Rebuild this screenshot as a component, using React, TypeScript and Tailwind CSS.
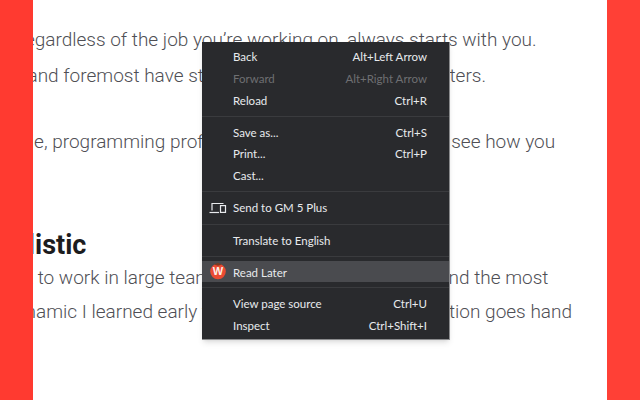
import React from 'react';

const Row = ({ label, keys, dim, active, icon }: { label: string; keys?: string; dim?: boolean; active?: boolean; icon?: React.ReactNode }) => (
  <div className={`flex items-center justify-between pl-[31px] pr-[22px] relative ${active ? 'bg-[#4a4b4f] -mt-px mb-px h-[21.7px] pt-[2px]' : 'h-[21.7px]'} ${dim ? 'text-[#6e6f72]' : 'text-[#e8eaed]'}`}>
    {icon && <span className="absolute left-[7px] top-0 h-full flex items-center">{icon}</span>}
    <span>{label}</span>
    {keys && <span>{keys}</span>}
  </div>
);

const Sep = () => <div className="h-px my-[4.75px] bg-[#3a3b3e]" />;

const CastIcon = () => (
  <svg width="18" height="14" viewBox="0 0 18 14" fill="none" stroke="#e8eaed" strokeWidth="1.2">
    <path d="M3 9.5V2.5H14.5" />
    <path d="M0.5 11.5H10" />
    <rect x="11.5" y="4.6" width="5" height="6.8" />
  </svg>
);

const TomatoIcon = () => (
  <svg width="18" height="18" viewBox="0 0 18 18">
    <circle cx="9" cy="9.5" r="7.8" fill="#ea4a32" />
    <path d="M5 2.4 L9 1 L13 2.4 L9 3.8 Z" fill="#7a3a22" />
    <text x="9" y="13.4" textAnchor="middle" fontSize="11" fontWeight="700" fill="#ffefe8" fontFamily="'Liberation Sans', sans-serif">W</text>
  </svg>
);

export default function App() {
  return (
    <div className="relative flex w-[640px] h-[400px] overflow-hidden bg-white">
      <div className="w-[33px] bg-[#ff3a30] shrink-0" />

      {/* Article */}
      <div className="flex-1 overflow-hidden">
        <div className="pt-[23px] whitespace-nowrap font-['Roboto',sans-serif] font-light text-[19px] leading-[34px] text-[#4f4f55]">
          <p className="-ml-[93px]">Success, regardless of the job you’re working on, always starts with you.</p>
          <p className="mt-[2px] -ml-[79px]">You first and foremost have strong and fixed internal characters.</p>
          <p className="mt-[32px] -ml-[92px]">For example, programming proficiency helps editors to better see how you</p>
          <h2 className="mt-[70px] -ml-[90px] font-bold text-[27px] leading-[32px] text-[#1c1c1e]">Be Realistic</h2>
          <p className="-ml-[37px]">I got to work in large teams of talented programmers and the most</p>
          <p className="-ml-[27px]">dynamic I learned early that a really good communication goes hand</p>
        </div>
      </div>

      <div className="w-[33px] bg-[#ff4036] shrink-0" />

      {/* Context menu */}
      <div className="absolute left-[202px] top-[42px] w-[248px] h-[298px] py-1 bg-[#292a2d] border-r border-b border-[#8a8b8d] font-['Lato',sans-serif] text-[11.5px] shadow-md">
        <Row label="Back" keys="Alt+Left Arrow" />
        <Row label="Forward" keys="Alt+Right Arrow" dim />
        <Row label="Reload" keys="Ctrl+R" />
        <Sep />
        <Row label="Save as..." keys="Ctrl+S" />
        <Row label="Print..." keys="Ctrl+P" />
        <Row label="Cast..." />
        <Sep />
        <Row label="Send to GM 5 Plus" icon={<CastIcon />} />
        <Sep />
        <Row label="Translate to English" />
        <Sep />
        <Row label="Read Later" active icon={<TomatoIcon />} />
        <Sep />
        <Row label="View page source" keys="Ctrl+U" />
        <Row label="Inspect" keys="Ctrl+Shift+I" />
      </div>
    </div>
  );
}
